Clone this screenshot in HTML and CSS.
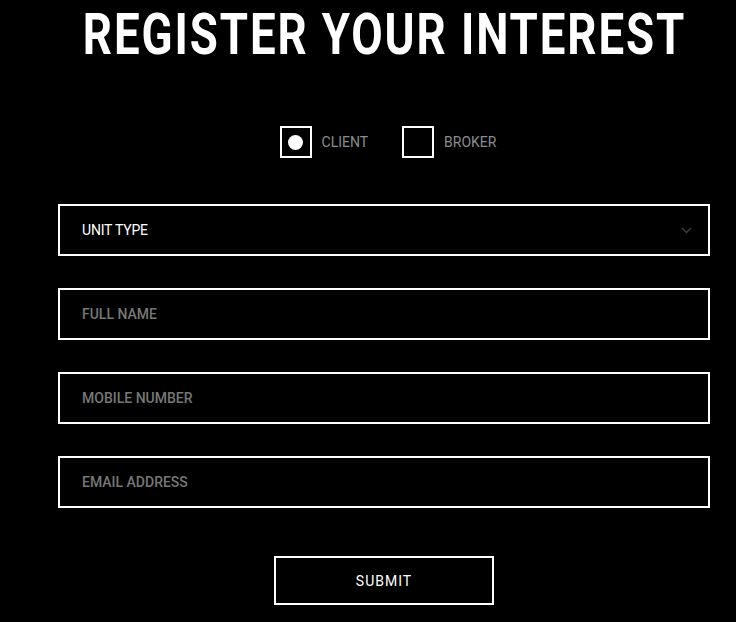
FILE: index.html
```html
<!DOCTYPE html>
<html lang="en">
<head>
<meta charset="utf-8">
<title>Register Your Interest</title>
<link rel="stylesheet" href="styles.css">
</head>
<body>
<main class="page">
  <h1 class="title"><span class="title-text">REGISTER YOUR INTEREST</span></h1>
  <form class="form">
    <div class="choice-row">
      <label class="choice">
        <span class="box"><span class="dot"></span></span>
        <span class="choice-label">CLIENT</span>
      </label>
      <label class="choice">
        <span class="box"></span>
        <span class="choice-label">BROKER</span>
      </label>
    </div>
    <div class="field field-select">
      <span class="select-text">UNIT TYPE</span>
      <svg class="chevron" width="11" height="7" viewBox="0 0 11 7"><path d="M1 1 L5.5 5.5 L10 1" fill="none" stroke="#3c3f46" stroke-width="1.5"/></svg>
    </div>
    <input class="field" type="text" placeholder="FULL NAME">
    <input class="field" type="text" placeholder="MOBILE NUMBER">
    <input class="field" type="text" placeholder="EMAIL ADDRESS">
    <div class="submit-row">
      <button class="submit" type="button">SUBMIT</button>
    </div>
  </form>
</main>
</body>
</html>
```

FILE: styles.css
```css
html, body {
  margin: 0;
  padding: 0;
  background: #000;
}
body {
  font-family: Roboto, "Liberation Sans", sans-serif;
  color: #fff;
  overflow: hidden;
}
.page {
  width: 652px;
  margin-left: 58px;
  display: flex;
  flex-direction: column;
}
.title {
  margin: 0;
  height: 62px;
  display: flex;
  justify-content: center;
  align-items: flex-start;
  font-weight: 700;
  font-size: 48px;
  line-height: normal;
  box-sizing: border-box;
}
.title-text {
  display: inline-block;
  line-height: normal;
  letter-spacing: 2px;
  transform: scale(0.95, 1.208);
  transform-origin: 50% 0;
  white-space: nowrap;
}
.form {
  display: flex;
  flex-direction: column;
  gap: 32px;
  margin-top: 64px;
}
.choice-row {
  display: flex;
  justify-content: center;
  gap: 34px;
  padding-left: 8px;
  margin-bottom: 14px;
}
.choice {
  display: flex;
  align-items: center;
  gap: 10px;
}
.box {
  width: 28px;
  height: 28px;
  border: 2px solid #fff;
  display: flex;
  align-items: center;
  justify-content: center;
}
.dot {
  width: 15px;
  height: 15px;
  border-radius: 50%;
  background: #fff;
}
.choice-label {
  font-size: 14px;
  color: #8a8d90;
}
.field {
  box-sizing: border-box;
  height: 52px;
  width: 100%;
  border: 2px solid #fff;
  background: #000;
  padding: 0 22px;
  font-family: Roboto, "Liberation Sans", sans-serif;
  font-size: 14px;
  font-weight: 500;
  color: #fff;
  outline: none;
  margin: 0;
}
.field::placeholder {
  color: #777;
}
.field-select {
  display: flex;
  align-items: center;
  justify-content: space-between;
  padding-right: 16px;
}
.select-text {
  font-weight: 400;
  letter-spacing: -0.2px;
}
.chevron {
  display: block;
}
.submit-row {
  display: flex;
  justify-content: center;
  margin-top: 16px;
}
.submit {
  box-sizing: border-box;
  width: 220px;
  height: 49px;
  border: 2px solid #fff;
  background: #000;
  color: #fff;
  font-family: Roboto, "Liberation Sans", sans-serif;
  font-size: 14px;
  letter-spacing: 1px;
  padding: 0;
}
```
